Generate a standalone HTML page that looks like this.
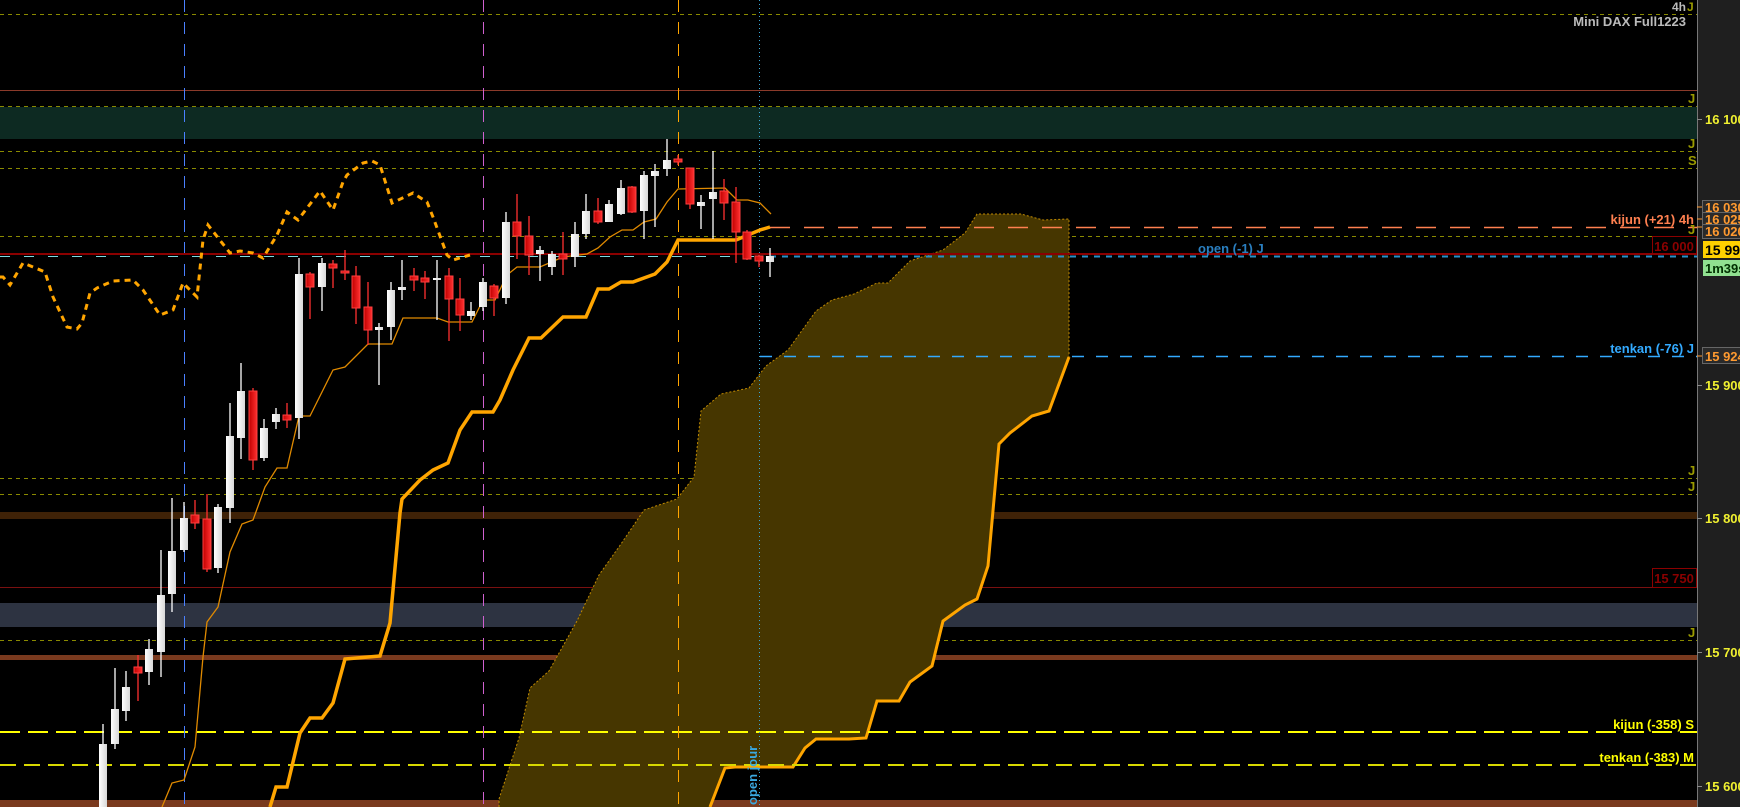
<!DOCTYPE html>
<html><head><meta charset="utf-8"><style>
html,body{margin:0;padding:0;background:#000;width:1740px;height:807px;overflow:hidden}
svg{display:block}
text{font-family:"Liberation Sans",sans-serif;font-weight:bold}
</style></head><body>
<svg width="1740" height="807" viewBox="0 0 1740 807" xmlns="http://www.w3.org/2000/svg">
<rect width="1740" height="807" fill="#000"/>
<!-- axis -->
<rect x="1697" y="0" width="43" height="807" fill="#1f1f1f"/>
<line x1="1697.5" y1="0" x2="1697.5" y2="807" stroke="#777" stroke-width="1"/>
<!-- bands -->
<rect x="0" y="107" width="1697" height="32" fill="#0d2a22"/>
<line x1="0" y1="90.5" x2="1697" y2="90.5" stroke="#8b3a2a"/>
<rect x="0" y="512" width="1697" height="7" fill="#3f2207"/>
<line x1="0" y1="587.5" x2="1697" y2="587.5" stroke="#7a1010"/>
<rect x="0" y="603" width="1697" height="24" fill="#2d3341"/>
<rect x="0" y="655" width="1697" height="5" fill="#7a3a1e"/>
<rect x="0" y="800" width="1697" height="7" fill="#7a3a1e"/>
<!-- olive dashed -->
<g stroke="#8a8a00" stroke-width="1" stroke-dasharray="4 4">
<line x1="0" y1="14.5" x2="1697" y2="14.5"/>
<line x1="0" y1="106.5" x2="1697" y2="106.5"/>
<line x1="0" y1="151.5" x2="1697" y2="151.5"/>
<line x1="0" y1="168.5" x2="1697" y2="168.5"/>
<line x1="0" y1="236.5" x2="1697" y2="236.5"/>
<line x1="0" y1="478.5" x2="1697" y2="478.5"/>
<line x1="0" y1="494.5" x2="1697" y2="494.5"/>
<line x1="0" y1="640.5" x2="1697" y2="640.5"/>
</g>
<!-- cloud -->
<polygon fill="#463600" points="499,807 499,799 519,738 530,688 549,671 577,621 599,575 621,544 644,510 677,499 694,477 701,411 721,394 749,388 766,366 788,350 816,311 832,300 854,294 877,283 888,283 910,261 943,250 965,233 977,214 1021,214 1043,220 1069,219 1069,357 1049,411 1032,416 1010,433 999,444 988,566 977,599 965,605 943,621 932,666 910,682 899,701 877,701 866,738 849,739 816,739 805,748 793,767 735,767 725,768 710,807"/>
<polyline fill="none" stroke="#c08a00" stroke-width="1" stroke-dasharray="2 2" points="499,807 499,799 519,738 530,688 549,671 577,621 599,575 621,544 644,510 677,499 694,477 701,411 721,394 749,388 766,366 788,350 816,311 832,300 854,294 877,283 888,283 910,261 943,250 965,233 977,214 1021,214 1043,220 1069,219 1069,357"/>
<polyline fill="none" stroke="#ffa500" stroke-width="3" points="1069,357 1049,411 1032,416 1010,433 999,444 988,566 977,599 965,605 943,621 932,666 910,682 899,701 877,701 866,738 849,739 816,739 805,748 793,767 735,767 725,768 710,807"/>
<!-- yellow dashed -->
<line x1="0" y1="732" x2="1697" y2="732" stroke="#ffff00" stroke-width="2" stroke-dasharray="20 8"/>
<line x1="0" y1="765" x2="1697" y2="765" stroke="#d8d800" stroke-width="2" stroke-dasharray="16 8"/>
<!-- vertical lines -->
<line x1="184.5" y1="0" x2="184.5" y2="807" stroke="#4a80ff" stroke-dasharray="12 10"/>
<line x1="483.5" y1="0" x2="483.5" y2="807" stroke="#d060d0" stroke-dasharray="12 10"/>
<line x1="678.5" y1="0" x2="678.5" y2="807" stroke="#ffa500" stroke-dasharray="12 10"/>
<line x1="759.5" y1="0" x2="759.5" y2="807" stroke="#3aa8d8" stroke-dasharray="1 3"/>
<!-- 16000 red + cyan -->
<line x1="0" y1="254" x2="1697" y2="254" stroke="#8b0000" stroke-width="2"/>
<line x1="0" y1="256.5" x2="770" y2="256.5" stroke="#7fd8e0" stroke-dasharray="10 14"/>
<line x1="770" y1="256.5" x2="1697" y2="256.5" stroke="#2a8fc8" stroke-width="2" stroke-dasharray="6 6"/>
<!-- kijun 4h / tenkan -->
<line x1="770" y1="227.5" x2="1697" y2="227.5" stroke="#ff8050" stroke-width="1.5" stroke-dasharray="20 14"/>
<line x1="760" y1="356.5" x2="1697" y2="356.5" stroke="#33aaff" stroke-width="1.5" stroke-dasharray="12 12"/>
<!-- chikou -->
<polyline fill="none" stroke="#ffa500" stroke-width="3" stroke-dasharray="6 5" points="0,277 3,277 10,285 23,263 33,267 45,272 53,297 67,327 77,329 82,323 90,293 97,288 113,281 133,280 143,290 160,315 173,310 183,283 190,290 197,297 203,240 208,225 230,253 240,251 253,253 263,258 277,235 287,212 298,220 320,191 333,210 343,182 347,175 363,163 372,161 380,165 392,203 413,193 427,202 433,217 447,255 453,260 470,255"/>
<!-- thick orange -->
<polyline fill="none" stroke="#ffa500" stroke-width="3.5" points="270,807 276,787 287,787 300,733 310,718 322,718 333,703 345,659 380,656 390,623 400,513 402,499 420,480 433,470 448,463 460,430 472,412 493,412 500,400 513,370 529,338 541,338 563,317 586,317 598,289 609,289 621,282 633,282 655,274 667,262 678,240 736,240 760,230 770,227"/>
<!-- thin orange -->
<polyline fill="none" stroke="#e08a00" stroke-width="1.3" points="162,807 172,783 184,780 195,747 203,657 207,622 218,607 230,552 242,524 253,520 265,487 277,468 287,468 299,416 310,416 333,370 345,367 368,344 392,344 403,318 437,318 448,322 472,322 483,300 495,300 507,275 517,267 540,267 563,257 587,254 598,248 610,237 622,230 633,230 644,222 656,219 667,202 678,189 725,188 737,200 748,200 760,203 771,214"/>
<defs><linearGradient id="wg" x1="0" x2="1"><stop offset="0" stop-color="#ffffff"/><stop offset="1" stop-color="#d8d8d8"/></linearGradient>
<linearGradient id="rg" x1="0" x2="1"><stop offset="0" stop-color="#c00000"/><stop offset="1" stop-color="#ff3030"/></linearGradient></defs>
<g id="c">
<g stroke="#fff" stroke-width="1.3">
<line x1="103" y1="724" x2="103" y2="807"/><line x1="115" y1="668" x2="115" y2="749"/><line x1="126" y1="671" x2="126" y2="721"/><line x1="149" y1="639" x2="149" y2="685"/><line x1="161" y1="550" x2="161" y2="677"/><line x1="172" y1="498" x2="172" y2="612"/><line x1="184" y1="502" x2="184" y2="552"/><line x1="218" y1="504" x2="218" y2="573"/><line x1="230" y1="403" x2="230" y2="523"/><line x1="241" y1="363" x2="241" y2="459"/><line x1="264" y1="419" x2="264" y2="461"/><line x1="276" y1="408" x2="276" y2="429"/><line x1="299" y1="258" x2="299" y2="439"/><line x1="322" y1="258" x2="322" y2="311"/><line x1="379" y1="323" x2="379" y2="385"/><line x1="391" y1="282" x2="391" y2="340"/><line x1="402" y1="260" x2="402" y2="300"/><line x1="437" y1="260" x2="437" y2="320"/><line x1="471" y1="302" x2="471" y2="320"/><line x1="483" y1="278" x2="483" y2="311"/><line x1="506" y1="212" x2="506" y2="304"/><line x1="540" y1="246" x2="540" y2="281"/><line x1="552" y1="251" x2="552" y2="275"/><line x1="575" y1="222" x2="575" y2="267"/><line x1="586" y1="194" x2="586" y2="239"/><line x1="609" y1="200" x2="609" y2="222"/><line x1="621" y1="180" x2="621" y2="215"/><line x1="644" y1="171" x2="644" y2="239"/><line x1="655" y1="164" x2="655" y2="227"/><line x1="667" y1="139" x2="667" y2="176"/><line x1="701" y1="195" x2="701" y2="229"/><line x1="713" y1="151" x2="713" y2="239"/><line x1="770" y1="248" x2="770" y2="277"/>
</g>
<g stroke="#ff3030" stroke-width="1.3">
<line x1="138" y1="655" x2="138" y2="701"/><line x1="195" y1="500" x2="195" y2="529"/><line x1="207" y1="494" x2="207" y2="572"/><line x1="253" y1="388" x2="253" y2="470"/><line x1="287" y1="403" x2="287" y2="428"/><line x1="310" y1="272" x2="310" y2="319"/><line x1="333" y1="260" x2="333" y2="288"/><line x1="345" y1="250" x2="345" y2="280"/><line x1="356" y1="266" x2="356" y2="324"/><line x1="368" y1="282" x2="368" y2="345"/><line x1="414" y1="268" x2="414" y2="291"/><line x1="425" y1="271" x2="425" y2="299"/><line x1="449" y1="268" x2="449" y2="341"/><line x1="460" y1="278" x2="460" y2="331"/><line x1="494" y1="284" x2="494" y2="316"/><line x1="517" y1="194" x2="517" y2="259"/><line x1="529" y1="216" x2="529" y2="275"/><line x1="563" y1="232" x2="563" y2="275"/><line x1="598" y1="198" x2="598" y2="224"/><line x1="632" y1="186" x2="632" y2="213"/><line x1="678" y1="155" x2="678" y2="165"/><line x1="690" y1="168" x2="690" y2="209"/><line x1="724" y1="179" x2="724" y2="220"/><line x1="736" y1="187" x2="736" y2="263"/><line x1="747" y1="230" x2="747" y2="260"/><line x1="759" y1="255" x2="759" y2="267"/>
</g>
<g fill="url(#wg)">
<rect x="99" y="744" width="8" height="63"/><rect x="111" y="709" width="8" height="35"/><rect x="122" y="687" width="8" height="24"/><rect x="145" y="649" width="8" height="23"/><rect x="157" y="595" width="8" height="57"/><rect x="168" y="551" width="8" height="43"/><rect x="180" y="518" width="8" height="32"/><rect x="214" y="507" width="8" height="61"/><rect x="226" y="436" width="8" height="72"/><rect x="237" y="391" width="8" height="47"/><rect x="260" y="428" width="8" height="30"/><rect x="272" y="414" width="8" height="8"/><rect x="295" y="274" width="8" height="144"/><rect x="318" y="263" width="8" height="24"/><rect x="375" y="327" width="8" height="3"/><rect x="387" y="290" width="8" height="37"/><rect x="398" y="287" width="8" height="3"/><rect x="433" y="278" width="8" height="2"/><rect x="467" y="311" width="8" height="5"/><rect x="479" y="282" width="8" height="25"/><rect x="502" y="222" width="8" height="76"/><rect x="536" y="250" width="8" height="4"/><rect x="548" y="254" width="8" height="13"/><rect x="571" y="234" width="8" height="23"/><rect x="582" y="211" width="8" height="23"/><rect x="605" y="204" width="8" height="18"/><rect x="617" y="188" width="8" height="26"/><rect x="640" y="175" width="8" height="36"/><rect x="651" y="171" width="8" height="5"/><rect x="663" y="160" width="8" height="9"/><rect x="697" y="202" width="8" height="4"/><rect x="709" y="192" width="8" height="7"/><rect x="766" y="256" width="8" height="6"/>
</g>
<g fill="url(#rg)" stroke="#ff4040" stroke-width="1">
<rect x="134" y="667" width="8" height="6"/><rect x="191" y="515" width="8" height="8"/><rect x="203" y="519" width="8" height="50"/><rect x="249" y="391" width="8" height="69"/><rect x="283" y="415" width="8" height="5"/><rect x="306" y="274" width="8" height="13"/><rect x="329" y="264" width="8" height="4"/><rect x="341" y="271" width="8" height="2"/><rect x="352" y="276" width="8" height="32"/><rect x="364" y="307" width="8" height="23"/><rect x="410" y="276" width="8" height="4"/><rect x="421" y="278" width="8" height="4"/><rect x="445" y="276" width="8" height="23"/><rect x="456" y="299" width="8" height="16"/><rect x="490" y="286" width="8" height="12"/><rect x="513" y="222" width="8" height="14"/><rect x="525" y="236" width="8" height="19"/><rect x="559" y="254" width="8" height="5"/><rect x="594" y="211" width="8" height="11"/><rect x="628" y="187" width="8" height="25"/><rect x="674" y="159" width="8" height="3"/><rect x="686" y="168" width="8" height="36"/><rect x="720" y="191" width="8" height="12"/><rect x="732" y="202" width="8" height="30"/><rect x="743" y="232" width="8" height="27"/><rect x="755" y="256" width="8" height="5"/>
</g>
</g>
<!-- chart labels -->
<text x="1686" y="11" font-size="12" fill="#bbbbbb" text-anchor="end">4h</text>
<text x="1687" y="11" font-size="12" fill="#9a9a00">J</text>
<text x="1686" y="26" font-size="13" fill="#bbbbbb" text-anchor="end">Mini DAX Full1223</text>
<g font-size="13" fill="#9a9a00">
<text x="1688" y="103">J</text><text x="1688" y="148">J</text><text x="1688" y="165">S</text><text x="1688" y="234">J</text><text x="1688" y="475">J</text><text x="1688" y="491">J</text><text x="1688" y="637">J</text>
</g>
<text x="1694" y="224" font-size="13" fill="#ff8050" text-anchor="end">kijun (+21) 4h</text>
<rect x="1652.5" y="236.5" width="44" height="18" fill="none" stroke="#8b0000"/>
<text x="1674" y="251" font-size="13" fill="#8b0000" text-anchor="middle">16 000</text>
<text x="1198" y="253" font-size="13" fill="#2a7fc0">open (-1) J</text>
<text x="1694" y="353" font-size="13" fill="#33aaff" text-anchor="end">tenkan (-76) J</text>
<rect x="1652.5" y="568.5" width="44" height="19" fill="none" stroke="#8b0000"/>
<text x="1674" y="583" font-size="13" fill="#8b0000" text-anchor="middle">15 750</text>
<text x="1694" y="729" font-size="13" fill="#ffff00" text-anchor="end">kijun (-358) S</text>
<text x="1694" y="762" font-size="13" fill="#ffff00" text-anchor="end">tenkan (-383) M</text>
<text transform="translate(757,805) rotate(-90)" font-size="13" fill="#3aa8e0">open jour</text>
<!-- axis labels -->
<g stroke="#888"><line x1="1697" y1="119.5" x2="1702" y2="119.5"/><line x1="1697" y1="385.5" x2="1702" y2="385.5"/><line x1="1697" y1="518.5" x2="1702" y2="518.5"/><line x1="1697" y1="652.5" x2="1702" y2="652.5"/><line x1="1697" y1="786.5" x2="1702" y2="786.5"/></g>
<g font-size="13" fill="#f0f030">
<text x="1705" y="124">16 100</text><text x="1705" y="390">15 900</text><text x="1705" y="523">15 800</text><text x="1705" y="657">15 700</text><text x="1705" y="791">15 600</text>
</g>
<g stroke="#666" fill="#2a2a2a">
<rect x="1702.5" y="200.5" width="40" height="13"/><rect x="1702.5" y="212.5" width="40" height="13"/><rect x="1702.5" y="224.5" width="40" height="14"/>
<rect x="1702.5" y="347.5" width="40" height="16"/>
</g>
<g font-size="13" fill="#ff9a30">
<text x="1705" y="212">16 030</text><text x="1705" y="224">16 025</text><text x="1705" y="236">16 020</text><text x="1705" y="361">15 924</text>
</g>
<rect x="1703" y="241" width="37" height="17" fill="#ffd000"/>
<text x="1705" y="255" font-size="14" fill="#000">15 99</text>
<rect x="1703" y="260" width="37" height="16" fill="#90e090"/>
<text x="1705" y="273" font-size="13" fill="#003000">1m39s</text>
<g stroke="#ff9a30"><line x1="1697" y1="207" x2="1702" y2="207"/><line x1="1697" y1="219" x2="1702" y2="219"/><line x1="1697" y1="227" x2="1702" y2="227"/><line x1="1697" y1="356" x2="1702" y2="356"/></g>
</svg>
</body></html>
